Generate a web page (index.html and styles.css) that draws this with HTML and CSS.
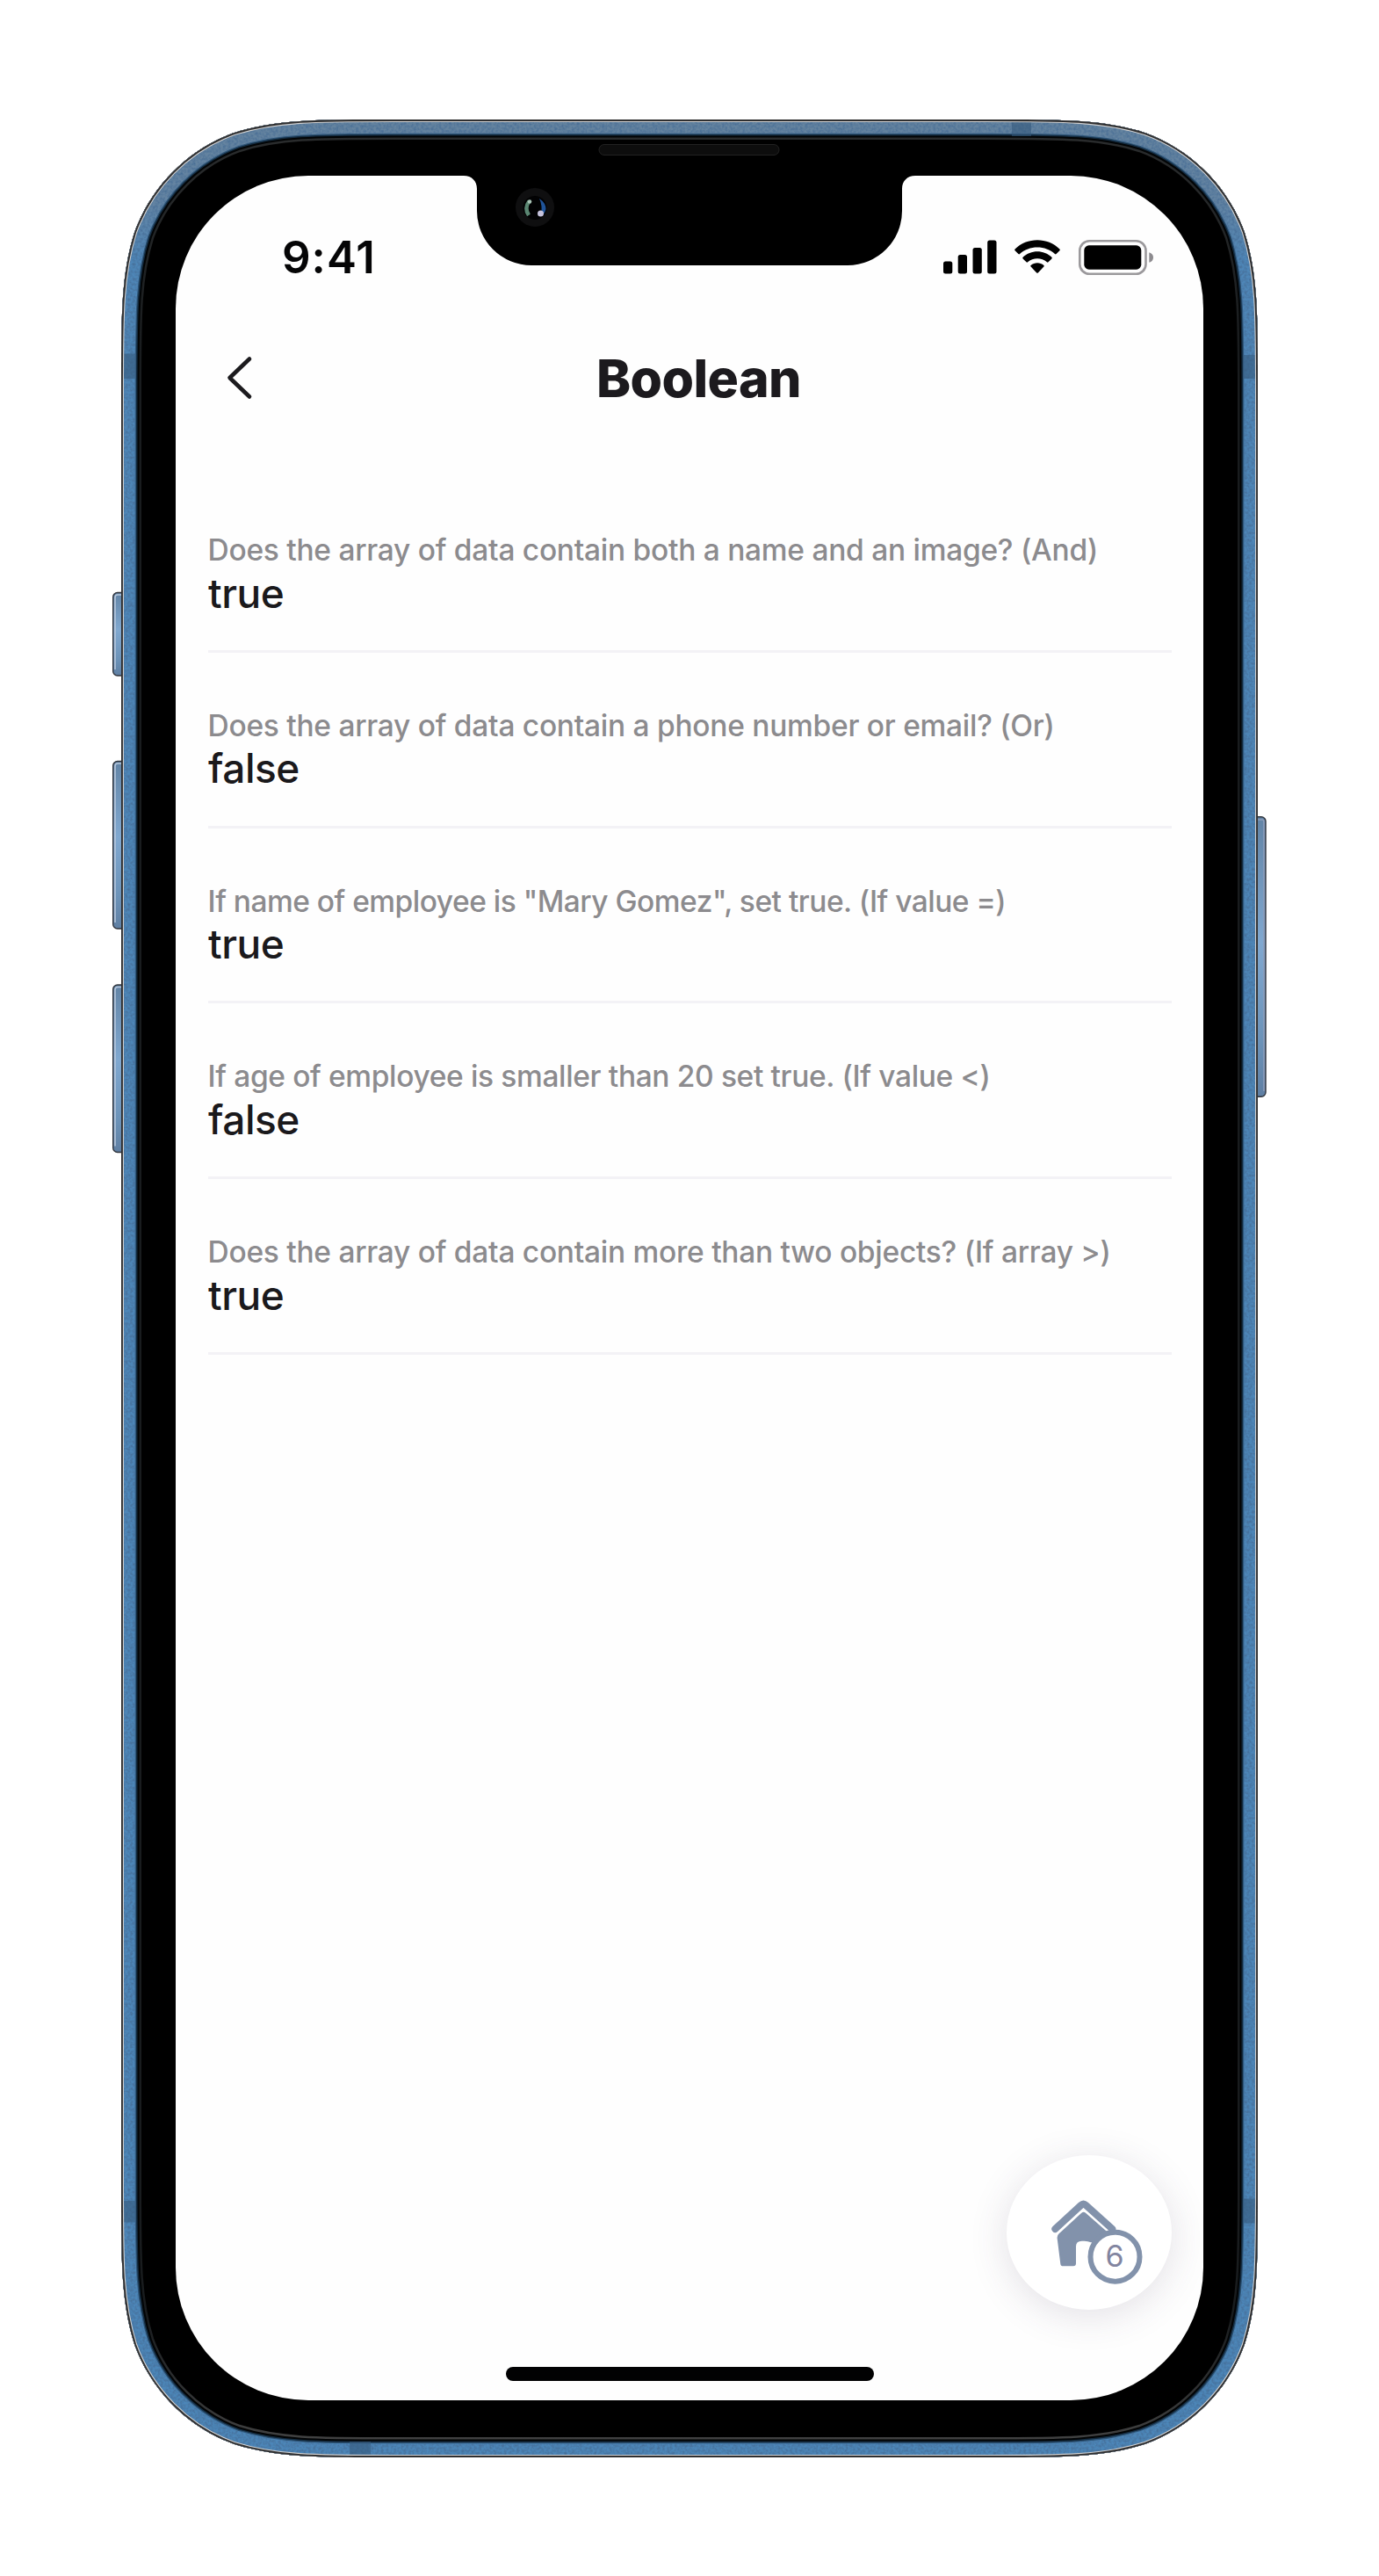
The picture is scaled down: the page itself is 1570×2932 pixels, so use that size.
FILE: index.html
```
<!DOCTYPE html>
<html lang="en">
<head>
<meta charset="utf-8">
<title>Boolean</title>
<link rel="stylesheet" href="styles.css">
</head>
<body>
<div class="device">
  <svg class="frame" viewBox="0 0 1570 2932" aria-hidden="true">
    <defs>
      <path id="body" d="M448.3 136H1121.7C1211 136 1255.7 136 1303.8 151.2C1356.3 170.3 1397.7 211.7 1416.8 264.2C1432 312.3 1432 357 1432 446.3V2486.7C1432 2576 1432 2620.7 1416.8 2668.8C1397.7 2721.3 1356.3 2762.7 1303.8 2781.8C1255.7 2797 1211 2797 1121.7 2797H448.3C359 2797 314.3 2797 266.2 2781.8C213.7 2762.7 172.3 2721.3 153.2 2668.8C138 2620.7 138 2576 138 2486.7V446.3C138 357 138 312.3 153.2 264.2C172.3 211.7 213.7 170.3 266.2 151.2C314.3 136 359 136 448.3 136Z"/>
      <clipPath id="bodyClip"><use href="#body"/></clipPath>
      <linearGradient id="metal" gradientUnits="userSpaceOnUse" x1="0" y1="136" x2="0" y2="2797">
        <stop offset="0" stop-color="#64839f"/>
        <stop offset=".035" stop-color="#6484a2"/>
        <stop offset=".06" stop-color="#4e86b7"/>
        <stop offset="1" stop-color="#4c86b8"/>
      </linearGradient>
      <linearGradient id="rim" gradientUnits="userSpaceOnUse" x1="0" y1="136" x2="0" y2="2797">
        <stop offset="0" stop-color="#2b2d2e"/>
        <stop offset=".1" stop-color="#191c1e"/>
        <stop offset=".94" stop-color="#191c1e"/>
        <stop offset="1" stop-color="#464646"/>
      </linearGradient>
      <linearGradient id="key" x1="0" y1="0" x2="0" y2="1">
        <stop offset="0" stop-color="#6284a6"/>
        <stop offset=".45" stop-color="#80a8d0"/>
        <stop offset=".8" stop-color="#6c93b9"/>
        <stop offset="1" stop-color="#5f7fa3"/>
      </linearGradient>
      <filter id="grain" filterUnits="userSpaceOnUse" x="136" y="134" width="1298" height="2665" color-interpolation-filters="sRGB">
        <feTurbulence type="fractalNoise" baseFrequency=".35" numOctaves="2" seed="3"/>
        <feColorMatrix values="0 0 0 0 .27  0 0 0 0 .42  0 0 0 0 .58  0 0 0 -1.6 1.05"/>
        <feComposite in2="SourceGraphic" operator="in" result="n"/>
        <feMerge><feMergeNode in="SourceGraphic"/><feMergeNode in="n"/></feMerge>
      </filter>
    </defs>

    <g fill="url(#key)" stroke="#30343c" stroke-width="1.4">
      <rect x="128.7" y="674.5" width="20" height="94.5" rx="5"/>
      <rect x="128.7" y="866.5" width="20" height="190.5" rx="5"/>
      <rect x="128.7" y="1121" width="20" height="190.5" rx="5"/>
      <rect x="1421" y="929.7" width="20" height="318.6" rx="5"/>
    </g>
    <g fill="none" stroke="#b7c7dc" stroke-width="1.6">
      <path d="M139 677h-5q-3 0-3 3v82"/>
      <path d="M139 869h-5q-3 0-3 3v178"/>
      <path d="M139 1123.500h-5q-3 0-3 3v178"/>
      <path d="M1432 933h5q2 0 2 3v306" stroke="#8d9dbb"/>
    </g>

    <use href="#body" fill="#000"/>
    <g clip-path="url(#bodyClip)" fill="none">
      <use href="#body" stroke="url(#rim)" stroke-width="46"/>
      <use href="#body" stroke="#020405" stroke-width="41"/>
      <use href="#body" stroke="#132a3e" stroke-width="37"/>
      <use href="#body" stroke="#2e5578" stroke-width="34"/>
      <use href="#body" stroke="url(#metal)" stroke-width="31.500" filter="url(#grain)"/>
      <g fill="#35597c" fill-opacity=".58">
        <rect x="138" y="402.500" width="17" height="28.500"/>
        <rect x="138" y="2505" width="17" height="24.500"/>
        <rect x="1415" y="404" width="17" height="27"/>
        <rect x="1415" y="2502.500" width="17" height="28"/>
        <rect x="1152" y="136" width="22" height="19"/>
        <rect x="398" y="2779" width="24" height="18"/>
      </g>
      <use href="#body" stroke="#cfcfcf" stroke-width="6"/>
      <use href="#body" stroke="#2f2f30" stroke-width="3.800"/>
    </g>
    <rect x="682" y="164.500" width="205" height="12" rx="6" fill="#0d0d0d" stroke="#222" stroke-width="1"/>
  </svg>

  <main class="screen">
    <header class="status">
      <time class="clock">9:41</time>
      <div class="indicators">
        <svg width="61" height="39" viewBox="0 0 61 39" aria-label="Signal">
          <rect x="0" y="24.500" width="10.300" height="14" rx="2.500"/>
          <rect x="16.700" y="17" width="10.300" height="21.500" rx="2.500"/>
          <rect x="33.500" y="9" width="10.300" height="29.500" rx="2.500"/>
          <rect x="50.200" y="0.500" width="10.300" height="38" rx="2.500"/>
        </svg>
        <svg width="52" height="39" viewBox="0 0 52 39" aria-label="Wi-Fi">
          <path d="M.6 10.600C14-3.200 38-3.200 51.400 10.600Q52.200 11.400 51.400 12.200L47.600 16Q46.800 16.800 46 16C35.500 6 16.500 6 6 16Q5.200 16.800 4.400 16L.6 12.200Q-.2 11.400.6 10.600Z"/>
          <path d="M9.600 19.800C18.500 11 33.500 11 42.400 19.800Q43.200 20.600 42.400 21.400L38.500 25.300Q37.700 26.100 36.900 25.300C31 20 21 20 15.100 25.300Q14.300 26.100 13.500 25.300L9.600 21.400Q8.800 20.600 9.600 19.800Z"/>
          <path d="M18.600 29C22.800 25.300 29.200 25.300 33.400 29Q34.200 29.800 33.400 30.600L26.800 37.400Q26 38.200 25.200 37.400L18.600 30.600Q17.800 29.800 18.600 29Z"/>
        </svg>
        <svg width="86" height="40" viewBox="0 0 86 40" aria-label="Battery">
          <rect x="1.300" y="1.300" width="75.200" height="37.400" rx="11" fill="none" stroke="#9b999c" stroke-width="2.600"/>
          <rect x="6.300" y="6.300" width="65" height="27.400" rx="5.500"/>
          <path d="M80.300 14.200Q85 15.600 85 20T80.300 25.800Z" fill="#8d8b8f"/>
        </svg>
      </div>
    </header>

    <nav class="nav">
      <svg class="back" width="34" height="56" viewBox="0 0 34 56" aria-label="Back"><path d="M28 6.500L5.500 28L28 49.500"/></svg>
      <h1 class="title">Boolean</h1>
    </nav>

    <ul class="list">
      <li class="row"><span class="label">Does the array of data contain both a name and an image? (And)</span><span class="value">true</span></li>
      <li class="row"><span class="label">Does the array of data contain a phone number or email? (Or)</span><span class="value">false</span></li>
      <li class="row"><span class="label label-tight">If name of employee is "Mary Gomez", set true. (If value =)</span><span class="value">true</span></li>
      <li class="row"><span class="label label-snug">If age of employee is smaller than 20 set true. (If value &lt;)</span><span class="value">false</span></li>
      <li class="row"><span class="label">Does the array of data contain more than two objects? (If array &gt;)</span><span class="value">true</span></li>
    </ul>

    <div class="home-bar"></div>

    <button class="fab" aria-label="Home">
      <svg width="105" height="98" viewBox="20 38 315 294">
        <path d="M33 140L121 59Q129.500 51 138 59L228 140" fill="none" stroke="#8292ab" stroke-width="24" stroke-linecap="round" stroke-linejoin="round"/>
        <path d="M123 85Q130 79 137 85L220 158V186H155Q145 181 133 181H124Q104 181 104 199V258Q104 267 95 267H60Q52 267 51 259L40 172Q39 162 46 156Z" fill="#8292ab"/>
        <circle cx="237.500" cy="235" r="84" fill="#fff" stroke="#8292ab" stroke-width="18"/>
        <text x="236.500" y="269" text-anchor="middle" class="badge">6</text>
      </svg>
    </button>

    <svg class="notch" width="514" height="102" viewBox="0 0 514 102" aria-hidden="true">
      <path d="M0 0C9 0 15 6 15 15V40A62 62 0 0 0 77 102H437A62 62 0 0 0 499 40V15C499 6 505 0 514 0Z"/>
      <circle cx="81" cy="36" r="22" fill="#0f0f10"/>
      <circle cx="81" cy="36.500" r="13.500" fill="#020203"/>
      <path d="M74.500 29Q68.500 37 74 45" fill="none" stroke="#5a8672" stroke-width="4.500"/>
      <path d="M86 26Q93.500 31 93.500 38Q92 44 88 46Q90 34 86 26Z" fill="#1f5398"/>
      <circle cx="75" cy="29.500" r="2.300" fill="#a9c4b6"/>
      <circle cx="87.500" cy="43" r="3.500" fill="#c6c3dd"/>
    </svg>
  </main>
</div>
</body>
</html>
```
FILE: styles.css
```
* {
  box-sizing: border-box;
}

body {
  margin: 0;
  background: #fff;
  font-family: Inter, "Liberation Sans", sans-serif;
}

.device {
  display: grid;
  width: 1570px;
  height: 2932px;
}

.frame,
.screen {
  grid-area: 1 / 1;
}

.frame {
  width: 1570px;
  height: 2932px;
}

.screen {
  position: relative;
  display: flex;
  flex-direction: column;
  width: 1170px;
  height: 2532px;
  margin: 200px;
  overflow: hidden;
  border-radius: 151px;
  background: #fefefe;
}

.status {
  display: flex;
  align-items: center;
  justify-content: space-between;
  height: 185px;
  padding: 0 56px 0 121px;
}

.clock {
  font-size: 51px;
  font-weight: 600;
  line-height: 62px;
  letter-spacing: 1px;
  color: #050506;
}

.indicators {
  display: flex;
  align-items: center;
  gap: 20px;
}

.indicators svg:last-child {
  margin-left: 1px;
}

.nav {
  display: flex;
  align-items: center;
  height: 90px;
  padding-left: 56px;
}

.back {
  fill: none;
  stroke: #1c1b1e;
  stroke-width: 4.6;
  stroke-linecap: round;
  stroke-linejoin: round;
}

.title {
  margin: 2px 0 0 389px;
  font-size: 59px;
  font-weight: 800;
  line-height: 72px;
  letter-spacing: -0.6px;
  color: #1c1a1e;
}

.list {
  display: flex;
  flex-direction: column;
  margin: 68px 0 0;
  padding: 0 36.5px;
  list-style: none;
}

.row {
  display: flex;
  flex-direction: column;
  height: 199.8px;
  padding-top: 62px;
  border-bottom: 3px solid #f3f2f6;
  white-space: nowrap;
}

.label {
  font-size: 33.5px;
  font-weight: 450;
  line-height: 43.5px;
  letter-spacing: -0.26px;
  color: #8c8b8e;
}

.label-snug {
  letter-spacing: -0.35px;
}

.label-tight {
  letter-spacing: -0.5px;
}

.value {
  margin-top: -2px;
  padding-left: 0.6px;
  font-size: 46px;
  font-weight: 450;
  line-height: 56px;
  letter-spacing: -0.5px;
  color: #1a191c;
}

.home-bar {
  width: 419px;
  height: 16px;
  margin: auto auto 22px;
  border-radius: 8px;
  background: #010102;
}

.fab {
  position: absolute;
  right: 36px;
  bottom: 103px;
  display: flex;
  align-items: center;
  justify-content: center;
  width: 188px;
  height: 176px;
  padding: 22px 0 0 18px;
  border: 0;
  border-radius: 94px / 88px;
  background: #fff;
  box-shadow: 0 7px 44px rgba(70, 55, 85, 0.15);
}

.badge {
  font-family: Inter, "Liberation Sans", sans-serif;
  font-size: 102px;
  fill: #8285a0;
}

.notch {
  position: absolute;
  top: 0;
  left: 328px;
}
```
